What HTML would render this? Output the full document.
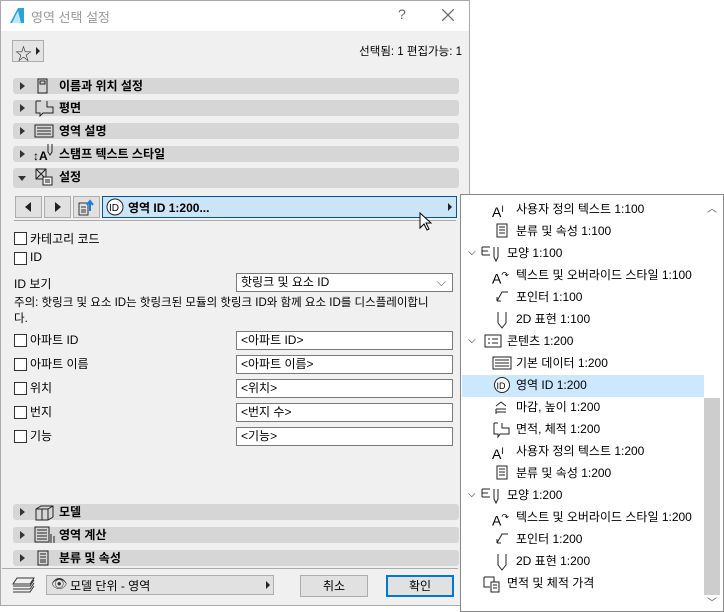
<!DOCTYPE html>
<html><head><meta charset="utf-8"><style>
*{box-sizing:border-box;margin:0;padding:0}
body{width:724px;height:612px;background:#fff;position:relative;overflow:hidden;font-family:"Liberation Sans","Noto Sans CJK KR",sans-serif;font-size:12px;color:#000}
.a{position:absolute}
#dlg{left:0;top:0;width:470px;height:606px;background:#f0f0f0;border:1px solid #aaa}
#title{left:1px;top:1px;width:468px;height:30px;background:#fff}
.bar{position:absolute;left:13px;width:446px;height:16px;background:#d6d6d6;border-radius:3px;font-weight:bold;font-size:12px;line-height:16px}
.bar .tri{position:absolute;left:7px;top:4px;width:0;height:0;border-left:5px solid #333;border-top:4px solid transparent;border-bottom:4px solid transparent}
.bar .t{position:absolute;left:46px;top:0}
.bar svg{position:absolute;left:20px;top:-1px}
.cb{position:absolute;left:14px;width:13px;height:13px;border:1px solid #333;background:#fff}
.lbl{position:absolute;white-space:nowrap}
.inp{position:absolute;left:236px;width:217px;height:19px;border:1px solid #7a7a7a;background:#fff;padding-left:4px;line-height:17px}
.btn{position:absolute;background:#e1e1e1;border:1px solid #adadad}
#pop{left:460px;top:194px;width:264px;height:418px;background:#fff;border:1px solid #888}
.r{position:absolute;height:22px;line-height:22px;white-space:nowrap;font-size:12px}
.r svg{position:absolute;top:3px}
</style></head><body>
<div id="dlg" class="a"></div>
<div id="title" class="a"></div>
<svg class="a" style="left:9px;top:7px" width="16" height="17"><path d="M1 16 L9 1 L15 1 L15 16 Z" fill="#2aa3d6"/><path d="M3 16 L9 4 L12 16Z" fill="#bfe6f6"/></svg>
<div class="lbl" style="left:31px;top:7px;font-size:13px;color:#999">영역 선택 설정</div>
<div class="lbl" style="left:398px;top:6px;font-size:14px;color:#666">?</div>
<svg class="a" style="left:442px;top:9px" width="12" height="12"><path d="M0 0L12 12M12 0L0 12" stroke="#666" stroke-width="1.2"/></svg>
<div class="btn" style="left:12px;top:40px;width:32px;height:22px;background:#e4e4e4"></div>
<div class="lbl" style="left:15px;top:40px;font-size:17px;color:#333">☆</div>
<div class="a" style="left:36px;top:47px;border-left:4px solid #222;border-top:4px solid transparent;border-bottom:4px solid transparent"></div>
<div class="lbl" style="right:262px;top:43px;font-size:11.5px">선택됨: 1 편집가능: 1</div>

<div class="bar" style="top:78px"><div class="tri"></div><svg width="20" height="18"><rect x="5" y="2" width="9" height="14" fill="none" stroke="#222"/><rect x="7" y="4" width="5" height="3" fill="none" stroke="#222"/></svg><div class="t">이름과 위치 설정</div></div>
<div class="bar" style="top:100px"><div class="tri"></div><svg width="22" height="18"><path d="M3 2 H8 M14 2 V8 H20 V14 H10 L7 17 V14 H3 V2" fill="none" stroke="#222"/></svg><div class="t">평면</div></div>
<div class="bar" style="top:123px"><div class="tri"></div><svg width="22" height="18"><rect x="2" y="3" width="18" height="12" fill="none" stroke="#222"/><path d="M4 6H18M4 9H18M4 12H18" stroke="#222"/></svg><div class="t">영역 설명</div></div>
<div class="bar" style="top:146px"><div class="tri"></div><svg width="24" height="20" style="left:18px;top:-4px"><text x="2" y="18" font-size="12" font-family="Liberation Sans">↕A</text><path d="M17 2 V10 L19 13 L21 10 V2" fill="none" stroke="#222"/></svg><div class="t">스탬프 텍스트 스타일</div></div>
<div class="bar" style="top:168px;height:20px;line-height:18px"><div class="tri" style="top:8px;left:5px;border-left:4px solid transparent;border-right:4px solid transparent;border-top:5px solid #333;border-bottom:0"></div><svg width="22" height="20"><rect x="3" y="2" width="10" height="10" fill="none" stroke="#222"/><path d="M3 2L13 12M13 2L3 12" stroke="#222"/><rect x="10" y="10" width="9" height="8" fill="#f0f0f0" stroke="#222"/><path d="M12 13H17M12 15H17" stroke="#222"/></svg><div class="t">설정</div></div>

<div class="btn" style="left:15px;top:196px;width:27px;height:22px"></div>
<div class="a" style="left:25px;top:202px;border-right:6px solid #222;border-top:5px solid transparent;border-bottom:5px solid transparent"></div>
<div class="btn" style="left:44px;top:196px;width:27px;height:22px"></div>
<div class="a" style="left:55px;top:202px;border-left:6px solid #222;border-top:5px solid transparent;border-bottom:5px solid transparent"></div>
<div class="btn" style="left:73px;top:196px;width:27px;height:22px"></div>
<svg class="a" style="left:77px;top:199px" width="20" height="18"><rect x="2" y="4" width="9" height="12" fill="none" stroke="#333"/><path d="M4 8H9M4 11H9M4 13H9" stroke="#333"/><path d="M13 12 V4 M10 6 L13 2 L16 6" stroke="#1e7ad3" stroke-width="2" fill="none"/></svg>
<div class="a" style="left:102px;top:196px;width:355px;height:22px;background:#cce4f7;border:1px solid #005499"></div>
<svg class="a" style="left:106px;top:198px" width="20" height="18"><circle cx="9" cy="9" r="8" fill="#fff" stroke="#222"/><text x="3" y="13" font-size="10" font-family="Liberation Sans">ID</text></svg>
<div class="lbl" style="left:128px;top:199px;font-weight:bold">영역 ID 1:200...</div>
<div class="a" style="left:448px;top:203px;border-left:4px solid #222;border-top:4px solid transparent;border-bottom:4px solid transparent"></div>
<div class="a" style="left:14px;top:220px;width:442px;height:1px;background:#aaa"></div>

<div class="cb" style="top:232px"></div><div class="lbl" style="left:30px;top:230px">카테고리 코드</div>
<div class="cb" style="top:252px"></div><div class="lbl" style="left:30px;top:250px">ID</div>
<div class="lbl" style="left:14px;top:275px">ID 보기</div>
<div class="inp" style="top:273px;height:19px;line-height:16px">핫링크 및 요소 ID<span style="position:absolute;right:6px;top:0;color:#555">⌵</span></div>
<div class="lbl" style="left:14px;top:294px;font-size:11.5px">주의: 핫링크 및 요소 ID는 핫링크된 모듈의 핫링크 ID와 함께 요소 ID를 디스플레이합니</div>
<div class="lbl" style="left:14px;top:310px;font-size:11.5px">다.</div>

<div class="cb" style="top:334px"></div><div class="lbl" style="left:30px;top:331px">아파트 ID</div><div class="inp" style="top:331px">&lt;아파트 ID&gt;</div>
<div class="cb" style="top:358px"></div><div class="lbl" style="left:30px;top:355px">아파트 이름</div><div class="inp" style="top:355px">&lt;아파트 이름&gt;</div>
<div class="cb" style="top:382px"></div><div class="lbl" style="left:30px;top:379px">위치</div><div class="inp" style="top:379px">&lt;위치&gt;</div>
<div class="cb" style="top:406px"></div><div class="lbl" style="left:30px;top:403px">번지</div><div class="inp" style="top:403px">&lt;번지 수&gt;</div>
<div class="cb" style="top:430px"></div><div class="lbl" style="left:30px;top:427px">기능</div><div class="inp" style="top:427px">&lt;기능&gt;</div>

<div class="bar" style="top:504px"><div class="tri"></div><svg width="24" height="18"><path d="M3 6 L8 3 L20 3 L20 14 L15 17 L3 17 Z M3 6 H15 V17 M15 6 L20 3 M9 6 V17" fill="none" stroke="#222"/></svg><div class="t">모델</div></div>
<div class="bar" style="top:527px"><div class="tri"></div><svg width="24" height="18"><rect x="2" y="1" width="14" height="15" fill="none" stroke="#222"/><path d="M4 4H14M4 7H14M4 10H14M4 13H14M18 8V17M21 10V17" stroke="#222"/></svg><div class="t">영역 계산</div></div>
<div class="bar" style="top:550px"><div class="tri"></div><svg width="20" height="18"><rect x="5" y="2" width="10" height="14" fill="none" stroke="#222"/><path d="M7 5H13M7 8H13M7 11H13M7 13H13" stroke="#222"/></svg><div class="t">분류 및 속성</div></div>
<div class="a" style="left:2px;top:568px;width:456px;height:1px;background:#aaa"></div>

<svg class="a" style="left:11px;top:576px" width="25" height="18"><path d="M6 2H23L19 8H2Z M2 10H19L23 4 M2 13H19L23 7 M2 16H19L23 10" fill="none" stroke="#333"/></svg>
<div class="a" style="left:46px;top:575px;width:228px;height:20px;background:#e1e1e1;border:1px solid #adadad"></div>
<div class="lbl" style="left:51px;top:576px;font-size:13px;color:#333">👁</div>
<div class="lbl" style="left:70px;top:577px">모델 단위 - 영역</div>
<div class="a" style="left:266px;top:581px;border-left:4px solid #222;border-top:4px solid transparent;border-bottom:4px solid transparent"></div>
<div class="btn" style="left:300px;top:575px;width:68px;height:22px;text-align:center;line-height:20px">취소</div>
<div class="btn" style="left:386px;top:575px;width:68px;height:22px;text-align:center;line-height:18px;border:2px solid #0078d7">확인</div>

<div id="pop" class="a"></div>
<div class="a" style="left:462px;top:375px;width:242px;height:22px;background:#cce8ff"></div>
<div class="a" style="left:704px;top:398px;width:16px;height:197px;background:#cdcdcd"></div>
<div class="lbl" style="left:707px;top:200px;font-size:10px;color:#555">︿</div>
<div class="lbl" style="left:707px;top:594px;font-size:10px;color:#555">﹀</div>

<div class="a" style="left:460px;top:198px;width:244px;height:410px">
<div class="r" style="top:0;left:32px"><span style="font-size:14px">A</span><sup style="font-size:9px">I</sup></div><div class="r" style="top:0;left:56px">사용자 정의 텍스트 1:100</div>
<div class="r" style="top:22px;left:36px"><svg width="12" height="16"><rect x="1" y="1" width="10" height="13" fill="none" stroke="#222"/><path d="M3 4H9M3 7H9M3 10H9" stroke="#222"/></svg></div><div class="r" style="top:22px;left:56px">분류 및 속성 1:100</div>
<div class="r" style="top:44px;left:8px;font-size:10px">⌵</div><div class="r" style="top:44px;left:20px"><svg width="24" height="18"><path d="M2 2H10M2 6H8M2 10H10M2 2V10M14 2V12L16 16L18 12V2" fill="none" stroke="#222"/></svg></div><div class="r" style="top:44px;left:47px">모양 1:100</div>
<div class="r" style="top:66px;left:32px;font-size:14px">A<sup style="font-size:9px">↷</sup></div><div class="r" style="top:66px;left:56px">텍스트 및 오버라이드 스타일 1:100</div>
<div class="r" style="top:88px;left:34px"><svg width="16" height="16"><path d="M14 3H8L3 12M3 12V8M3 12H7" fill="none" stroke="#222"/></svg></div><div class="r" style="top:88px;left:56px">포인터 1:100</div>
<div class="r" style="top:110px;left:36px"><svg width="12" height="18"><path d="M2 1V12L6 17L10 12V1" fill="none" stroke="#222"/></svg></div><div class="r" style="top:110px;left:56px">2D 표현 1:100</div>
<div class="r" style="top:132px;left:8px;font-size:10px">⌵</div><div class="r" style="top:132px;left:24px"><svg width="18" height="16"><rect x="1" y="2" width="16" height="12" fill="none" stroke="#222"/><path d="M4 6H6M8 6H14M4 10H6M8 10H14" stroke="#222"/></svg></div><div class="r" style="top:132px;left:47px">콘텐츠 1:200</div>
<div class="r" style="top:154px;left:32px"><svg width="20" height="16"><rect x="1" y="2" width="18" height="12" fill="none" stroke="#222"/><path d="M3 5H17M3 8H17M3 11H17" stroke="#222"/></svg></div><div class="r" style="top:154px;left:56px">기본 데이터 1:200</div>
<div class="r" style="top:176px;left:34px"><svg width="18" height="18"><circle cx="8" cy="8" r="7.5" fill="#fff" stroke="#222"/><text x="2.5" y="12" font-size="9" font-family="Liberation Sans">ID</text></svg></div><div class="r" style="top:176px;left:56px">영역 ID 1:200</div>
<div class="r" style="top:198px;left:34px"><svg width="16" height="16"><path d="M2 7L7 3L12 7M2 10H12M2 13H12M2 10V15" fill="none" stroke="#222"/></svg></div><div class="r" style="top:198px;left:56px">마감, 높이 1:200</div>
<div class="r" style="top:220px;left:32px"><svg width="20" height="18"><path d="M2 2H6M10 2V7H17V13H8L6 16V13H2V2" fill="none" stroke="#222"/></svg></div><div class="r" style="top:220px;left:56px">면적, 체적 1:200</div>
<div class="r" style="top:242px;left:32px"><span style="font-size:14px">A</span><sup style="font-size:9px">I</sup></div><div class="r" style="top:242px;left:56px">사용자 정의 텍스트 1:200</div>
<div class="r" style="top:264px;left:36px"><svg width="12" height="16"><rect x="1" y="1" width="10" height="13" fill="none" stroke="#222"/><path d="M3 4H9M3 7H9M3 10H9" stroke="#222"/></svg></div><div class="r" style="top:264px;left:56px">분류 및 속성 1:200</div>
<div class="r" style="top:286px;left:8px;font-size:10px">⌵</div><div class="r" style="top:286px;left:20px"><svg width="24" height="18"><path d="M2 2H10M2 6H8M2 10H10M2 2V10M14 2V12L16 16L18 12V2" fill="none" stroke="#222"/></svg></div><div class="r" style="top:286px;left:47px">모양 1:200</div>
<div class="r" style="top:308px;left:32px;font-size:14px">A<sup style="font-size:9px">↷</sup></div><div class="r" style="top:308px;left:56px">텍스트 및 오버라이드 스타일 1:200</div>
<div class="r" style="top:330px;left:34px"><svg width="16" height="16"><path d="M14 3H8L3 12M3 12V8M3 12H7" fill="none" stroke="#222"/></svg></div><div class="r" style="top:330px;left:56px">포인터 1:200</div>
<div class="r" style="top:352px;left:36px"><svg width="12" height="18"><path d="M2 1V12L6 17L10 12V1" fill="none" stroke="#222"/></svg></div><div class="r" style="top:352px;left:56px">2D 표현 1:200</div>
<div class="r" style="top:374px;left:22px"><svg width="22" height="18"><path d="M2 2H12V8M2 2V12H8" fill="none" stroke="#222"/><rect x="9" y="7" width="8" height="10" fill="#fff" stroke="#222"/><path d="M11 10H15M11 13H15" stroke="#222"/></svg></div><div class="r" style="top:374px;left:47px">면적 및 체적 가격</div>
</div>

<svg class="a" style="left:419px;top:212px" width="14" height="20"><path d="M1 1V16L5 12L8 18L10 17L7 11H12Z" fill="#fff" stroke="#000"/></svg>
</body></html>
